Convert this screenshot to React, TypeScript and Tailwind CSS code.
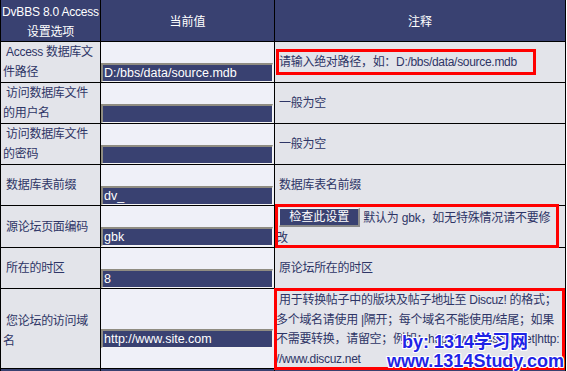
import React from "react";

const c1 =
  "bg-[#e3e4ea] flex flex-col justify-center pl-[2px] text-[#2e3566] text-[12px] leading-[20px] tracking-[-0.3px] whitespace-nowrap";
const c3 =
  "bg-[#e3e4ea] relative flex flex-col justify-center pl-px text-[#2e3566] text-[12px] leading-[20px] tracking-[-0.3px] whitespace-nowrap";
const head =
  "bg-[#394171] text-white text-[12px] leading-[20px] flex flex-col items-center justify-center pt-[3px] whitespace-nowrap";

function Field({ value }: { value: string }) {
  return (
    <div className="bg-[#eff0f8] flex flex-col justify-center">
      <div className="h-[20px]" />
      <input
        readOnly
        value={value}
        className="h-[19px] w-[172px] bg-[#394171] text-white text-[12.5px] leading-[15px] pl-px outline-none border-t-2 border-l-2 border-r border-b border-t-[#8f8c82] border-l-[#8f8c82] border-r-[#f4f4f4] border-b-[#f4f4f4]"
      />
    </div>
  );
}

export default function App() {
  return (
    <div className="w-[567px] h-[371px] overflow-hidden bg-white font-['Liberation_Sans','Noto_Sans_CJK_SC',sans-serif]">
      <div className="grid w-[566px] grid-cols-[99px_173px_290px] grid-rows-[41px_40px_40px_40px_40px_41px_40px_79px_30px] gap-px bg-black px-px">
        {/* header */}
        <div className={head + " tracking-[-0.2px]"}>
          <span>DvBBS 8.0 Access</span>
          <span>设置选项</span>
        </div>
        <div className={head}>当前值</div>
        <div className={head}>注释</div>

        {/* row 1 */}
        <div className={c1}>
          <span>&nbsp;Access 数据库文</span>
          <span>件路径</span>
        </div>
        <Field value="D:/bbs/data/source.mdb" />
        <div className={c3}>
          <span>&nbsp;请输入绝对路径，如：D:/bbs/data/source.mdb</span>
          <div className="absolute left-px top-[7px] w-[260px] h-[26px] border-[3px] border-[#ff0000]" />
        </div>

        {/* row 2 */}
        <div className={c1}>
          <span>&nbsp;访问数据库文件</span>
          <span>的用户名</span>
        </div>
        <Field value="" />
        <div className={c3}>
          <span>&nbsp;一般为空</span>
        </div>

        {/* row 3 */}
        <div className={c1}>
          <span>&nbsp;访问数据库文件</span>
          <span>的密码</span>
        </div>
        <Field value="" />
        <div className={c3}>
          <span>&nbsp;一般为空</span>
        </div>

        {/* row 4 */}
        <div className={c1}>
          <span>&nbsp;数据库表前缀</span>
        </div>
        <Field value="dv_" />
        <div className={c3}>
          <span>&nbsp;数据库表名前缀</span>
        </div>

        {/* row 5 */}
        <div className={c1}>
          <span>&nbsp;源论坛页面编码</span>
        </div>
        <Field value="gbk" />
        <div className="bg-[#e3e4ea] relative pl-px pt-[2px] text-[#2e3566] text-[12px] leading-[20px] tracking-[-0.2px] whitespace-nowrap">
          <div>
            &nbsp;
            <button className="inline-flex align-top items-center justify-center h-[19px] w-[81px] bg-[#394171] text-white text-[12px] leading-[15px] tracking-normal border-t border-l border-t-[#f2f2f2] border-l-[#f2f2f2] border-r-2 border-b-2 border-r-[#8a8a8a] border-b-[#8a8a8a]">
              检查此设置
            </button>
            &nbsp;默认为 gbk，如无特殊情况请不要修
          </div>
          <div>改</div>
          <div className="absolute left-0 top-[-2px] w-[284px] h-[44px] border-[3px] border-[#ff0000]" />
        </div>

        {/* row 6 */}
        <div className={c1}>
          <span>&nbsp;所在的时区</span>
        </div>
        <Field value="8" />
        <div className={c3}>
          <span>&nbsp;原论坛所在的时区</span>
        </div>

        {/* row 7 */}
        <div className={c1 + " pt-[4px]"}>
          <span>&nbsp;您论坛的访问域</span>
          <span>名</span>
        </div>
        <Field value="http://www.site.com" />
        <div className="bg-[#e3e4ea] relative pl-px pt-[2px] text-[#2e3566] text-[12px] leading-[19.5px] tracking-[-0.3px] whitespace-nowrap">
          <div>&nbsp;用于转换帖子中的版块及帖子地址至 Discuz! 的格式；</div>
          <div>多个域名请使用 |隔开；每个域名不能使用/结尾；如果</div>
          <div>不需要转换，请留空；例如：http://www.discuz.net|http:</div>
          <div>//www.discuz.net</div>
          <div className="absolute left-[-1px] top-[-1px] w-[291px] h-[82px] border-[3px] border-[#ff0000] z-10" />
          <div className="absolute left-[112px] top-[44px] z-20 text-[18px] leading-[19px] font-bold tracking-normal text-[#1f24e6] [text-shadow:1px_1px_0_#fff,-1px_-1px_0_#fff,1px_-1px_0_#fff,-1px_1px_0_#fff,0_1px_0_#fff,0_-1px_0_#fff,1px_0_0_#fff,-1px_0_0_#fff]">
            <div className="pl-[15px]">by: 1314学习网</div>
            <div>www.1314Study.com</div>
          </div>
        </div>

        {/* next row (cut off) */}
        <div className="bg-[#394171]" />
        <div className="bg-[#394171]" />
        <div className="bg-[#394171]" />
      </div>
    </div>
  );
}
